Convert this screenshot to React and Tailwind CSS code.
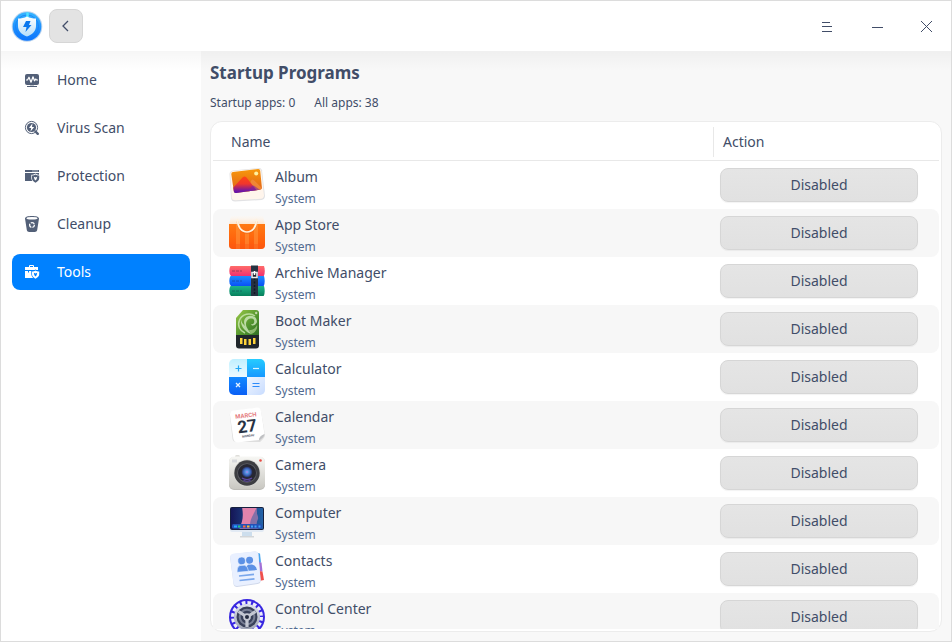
import React from 'react';

const svgProps = { 'aria-hidden': true, className: 'block size-9 shrink-0', viewBox: '0 0 36 36' };

function LogoIcon() {
  return (
    <svg aria-hidden="true" className="block size-8 shrink-0" viewBox="0 0 32 32">
      <defs>
        <linearGradient id="logoRing" x1="0" y1="0" x2="0" y2="1">
          <stop offset="0" stopColor="#35b4ff" />
          <stop offset="1" stopColor="#0a74ff" />
        </linearGradient>
        <linearGradient id="logoShield" x1="0" y1="0" x2="0" y2="1">
          <stop offset="0" stopColor="#ffffff" />
          <stop offset="1" stopColor="#b5defa" />
        </linearGradient>
      </defs>
      <circle cx="16" cy="16.500" r="15.300" fill="#b9d3ee" />
      <circle cx="16" cy="16.500" r="14.300" fill="url(#logoRing)" />
      <circle cx="16" cy="16.500" r="11.500" fill="none" stroke="#1a7bf0" strokeWidth="1" opacity=".7" />
      <path d="M16.500 2.500v5" stroke="#4fe0ff" strokeWidth="2.500" />
      <path d="M16 6.500c2.700 1.600 5.700 2 9 2v7.500c0 5-3.700 8.600-9 10.500-5.300-1.900-9-5.500-9-10.500V8.500c3.300 0 6.300-.4 9-2z" fill="url(#logoShield)" />
      <path d="M15 11h4.500l-1.500 4h2.500L14.500 22l1-5H12z" fill="#0a78ee" />
    </svg>
  );
}

function HomeIcon() {
  return (
    <svg aria-hidden="true" className="block size-4 shrink-0" viewBox="0 0 16 16">
      <path d="M3 2h10a2 2 0 0 1 2 2v7a2 2 0 0 1-2 2H3a2 2 0 0 1-2-2V4a2 2 0 0 1 2-2z" fill="#536078" />
      <path d="M3 14h10v1H3z" fill="#536078" />
      <path d="M6 13h4v1H6z" fill="#536078" opacity=".35" />
      <path d="M2 8h1.500L5 5.200l2 5 2-5.400 1.500 4L11.800 7l.8 1H14" fill="none" stroke="#fff" strokeWidth="1.200" strokeLinejoin="round" />
    </svg>
  );
}

function ScanIcon() {
  return (
    <svg aria-hidden="true" className="block size-4 shrink-0" viewBox="0 0 16 16">
      <circle cx="7.500" cy="7.500" r="6.100" fill="none" stroke="#536078" strokeWidth="1" />
      <circle cx="7.500" cy="7.500" r="4.600" fill="#536078" />
      <path d="M8.500 3.200 5 8h2.200l-.8 3.800L10.200 7H8z" fill="#fff" />
      <path d="m11.500 11.500 2.300 2.300" stroke="#536078" strokeWidth="2.400" strokeLinecap="round" />
    </svg>
  );
}

function ShieldBadge({ fill, gap }) {
  return (
    <>
      <path d="M11.500 5.500c1.300 1 2.500 1.200 4.500 1.200v3.600c0 2.300-2 3.900-4.500 5-2.400-1.100-4.200-2.700-4.200-5V6.700c1.700 0 2.900-.2 4.200-1.200z" fill={gap} />
      <path d="M11.500 6.500c1.100.8 2.200 1 3.700 1v2.800c0 2-1.600 3.400-3.700 4.400-2.100-1-3.500-2.400-3.500-4.400V7.500c1.300 0 2.400-.2 3.500-1z" fill={fill} />
      <path d="m9.800 8.800 1.700.8 1.700-.8-.6 2.400-1.100 1.200-1.100-1.200z" fill={gap} />
    </>
  );
}

function ProtectionIcon() {
  return (
    <svg aria-hidden="true" className="block size-4 shrink-0" viewBox="0 0 16 16">
      <path d="M1 2h14v2H1zM1 5h14v3H9v5H1z" fill="#536078" />
      <path d="M8.500 2.500h1v1h-1zM10.500 2.500h1v1h-1zM12.500 2.500h1v1h-1z" fill="#fff" />
      <ShieldBadge fill="#536078" gap="#fff" />
    </svg>
  );
}

function CleanupIcon() {
  return (
    <svg aria-hidden="true" className="block size-4 shrink-0" viewBox="0 0 16 16">
      <path d="M1 2.500C1 .8 4 0 8 0s7 .8 7 2.500L13.200 14c-.2 1.300-1.200 2-2.400 2H5.200c-1.200 0-2.200-.7-2.400-2z" fill="#536078" />
      <ellipse cx="8" cy="2.300" rx="5.600" ry="1.200" fill="#fff" />
      <circle cx="8" cy="9" r="2.400" fill="none" stroke="#fff" strokeWidth="1.300" strokeDasharray="4 1" strokeDashoffset="1" />
    </svg>
  );
}

function ToolsIcon() {
  return (
    <svg aria-hidden="true" className="block size-4 shrink-0" viewBox="0 0 16 16">
      <path d="M5.500 3.500v-2h4v2" fill="none" stroke="#fff" strokeWidth="1" />
      <path d="M1 3h13v3H1zM1 7h13v3H9v4H1z" fill="#fff" />
      <path d="M4 7h1v1.500H4zM10 7h1v1h-1z" fill="#0081ff" />
      <ShieldBadge fill="#fff" gap="#0081ff" />
    </svg>
  );
}

function AlbumIcon() {
  return (
    <svg {...svgProps}>
      <defs>
        <linearGradient id="albumSky" x1="0" y1="0" x2="0" y2="1">
          <stop offset="0" stopColor="#fa9d0a" />
          <stop offset="1" stopColor="#d9521c" />
        </linearGradient>
        <linearGradient id="albumHill" x1="0" y1="0" x2="0" y2="1">
          <stop offset="0" stopColor="#ff4614" />
          <stop offset=".4" stopColor="#f0362c" />
          <stop offset=".75" stopColor="#7a189c" />
          <stop offset="1" stopColor="#3d06c8" />
        </linearGradient>
        <clipPath id="albumClip"><path d="M4 5 29 2q2-.2 2.200 1.800l1.700 16.700q.2 2-1.800 2.300L7 26q-2 .2-2.200-1.800L2.300 7.200Q2.200 5.200 4 5z" /></clipPath>
      </defs>
      <path d="M4 3.500 30 1q2.400 0 3 2.200L36 29q-.2 3.500-3.500 4L6 34.500q-3.500 0-4-3.500L.5 7Q.6 4 4 3.500z" fill="#e2e2e4" />
      <path d="M4 4 29.500 1.700q2.300 0 2.700 2L35 28.500q-.2 3-3 3.300L6.200 33.300Q3 33 2.700 30.500L1.300 7.500Q1.300 4.500 4 4z" fill="#fff5ec" />
      <g clipPath="url(#albumClip)">
        <path d="M0 0h36v30H0z" fill="url(#albumSky)" />
        <path d="m17 25 5.500-12q1.200-1 2.200 0L36 24v4H14z" fill="#f08a3c" opacity=".85" />
        <path d="M2 27v-4L13.500 10.500q2-2 4 0L29 25v3z" fill="url(#albumHill)" />
        <path d="m17 27 6-8q1.200-1.200 2.500 0L34 25v4z" fill="#7425a8" opacity=".55" />
      </g>
      <circle cx="27.200" cy="6.500" r="2" fill="#fff1a0" />
    </svg>
  );
}

function StoreIcon() {
  return (
    <svg {...svgProps}>
      <defs>
        <linearGradient id="storeTop" x1="0" y1="0" x2="0" y2="1">
          <stop offset="0" stopColor="#fff7ef" stopOpacity=".3" />
          <stop offset="1" stopColor="#ffe2c4" />
        </linearGradient>
        <linearGradient id="storeBag" x1="0" y1="0" x2="0" y2="1">
          <stop offset="0" stopColor="#ff7a12" />
          <stop offset="1" stopColor="#ff560a" />
        </linearGradient>
      </defs>
      <path d="M2 1h32l2 9H0z" fill="url(#storeTop)" />
      <path d="M0 9h36v21q0 4-4 4H4q-4 0-4-4z" fill="url(#storeBag)" />
      <path d="M7 9h4v25H7zM25 9h4v25h-4zM16 18h4v16h-4z" fill="#ffa24a" opacity=".45" />
      <path d="M0 29h36v1q0 4-4 4H4q-4 0-4-4z" fill="#fa5a14" opacity=".45" />
      <path d="M8.500 5.500C9 12.500 13 17 18 17s9-4.500 9.500-11.500" fill="none" stroke="#e45d10" strokeWidth="2" transform="translate(0 1)" opacity=".4" />
      <path d="M8.500 4.500C8.500 12 12.500 17 18 17s9.500-5 9.500-12.500" fill="none" stroke="#fff3de" strokeWidth="1.700" strokeLinecap="round" />
    </svg>
  );
}

function ArchiveIcon() {
  return (
    <svg {...svgProps}>
      <defs>
        <linearGradient id="arcRed" x1="0" y1="0" x2="0" y2="1"><stop offset="0" stopColor="#ff6c68" /><stop offset="1" stopColor="#f03170" /></linearGradient>
        <linearGradient id="arcBlue" x1="0" y1="0" x2="0" y2="1"><stop offset="0" stopColor="#1c8cff" /><stop offset="1" stopColor="#0a50f5" /></linearGradient>
        <linearGradient id="arcGreen" x1="0" y1="0" x2="0" y2="1"><stop offset="0" stopColor="#1cb48c" /><stop offset="1" stopColor="#07805c" /></linearGradient>
      </defs>
      <path d="M1.500 23H35q.7 2 .7 5t-1 5H2Q.3 31.500.3 28t1.200-5z" fill="url(#arcGreen)" />
      <path d="M1.500 13H35q.7 2 .7 5t-1 5H2Q.3 21.500.3 18t1.200-5z" fill="url(#arcBlue)" />
      <path d="M1.500 3H35q.8 2 .8 5t-1 5H2Q.3 11.500.3 8t1.200-5z" fill="url(#arcRed)" />
      <path d="M3 8h10M3 18h10M3 28h10" stroke="#1b2345" strokeWidth="2" strokeDasharray="3 1" opacity=".2" />
      <path d="M22 2.500h7V33h-7z" fill="#263241" />
      <path d="M25.500 15v17" stroke="#111925" strokeWidth="1.500" strokeDasharray="2 1.500" />
      <path d="M23 9.500h5v5h-5z" fill="#20252d" stroke="#e8ebef" strokeWidth="1.600" />
      <path d="M25.500 8v4" stroke="#fff" strokeWidth="1.500" />
    </svg>
  );
}

function BootIcon() {
  return (
    <svg aria-hidden="true" className="block h-9 w-9 shrink-0 overflow-visible" viewBox="0 0 36 36">
      <defs>
        <linearGradient id="bootCard" x1="0" y1="0" x2="1" y2="1"><stop offset="0" stopColor="#9bc948" /><stop offset=".6" stopColor="#4f922d" /><stop offset="1" stopColor="#2e6c25" /></linearGradient>
      </defs>
      <path d="M14-1h13q3 0 3 3v23H7V7z" fill="url(#bootCard)" />
      <path d="M7 24h23v10.500q0 3-3 3H10q-3 0-3-3z" fill="#20262b" />
      <path d="M26 5C21 1 13 3 10.500 9c-2.500 6 .5 11 5.500 13" fill="none" stroke="#d4edbd" strokeWidth="1.500" opacity=".75" />
      <path d="M12 8c-1 8 5 13 10 15-2-4-5-6-5-10 0-5 6-7 8-4 1 3-1 5-3 4 1 3 5 1 6-2 0-5-4-7-8-6-5 1-6 6-4 10-2-2-4-4-4-7z" fill="#d9efc8" opacity=".75" />
      <path d="M22 23c4-1 7-5 6-9-2 4-5 5-8 5z" fill="#bfe09f" opacity=".6" />
      <circle cx="27.200" cy="2" r="1.200" fill="#c2d8a8" />
      <path d="M11 27h2.500v6H11zM15 28h2.500v6H15zM19.500 28H22v6h-2.500zM24 27h2.500v6H24z" fill="#ffd43a" />
    </svg>
  );
}

function CalculatorIcon() {
  return (
    <svg {...svgProps}>
      <defs>
        <clipPath id="calcClip"><rect width="36" height="36" rx="5" /></clipPath>
        <linearGradient id="calcA" x1="0" y1="0" x2="0" y2="1"><stop offset="0" stopColor="#26ccff" /><stop offset="1" stopColor="#1698ff" /></linearGradient>
        <linearGradient id="calcB" x1="0" y1="0" x2="1" y2="1"><stop offset="0" stopColor="#f0f6ff" /><stop offset="1" stopColor="#c8dcff" /></linearGradient>
        <linearGradient id="calcC" x1="0" y1="0" x2="0" y2="1"><stop offset="0" stopColor="#bff0ff" /><stop offset="1" stopColor="#eefaff" /></linearGradient>
        <linearGradient id="calcD" x1="0" y1="0" x2="0" y2="1"><stop offset="0" stopColor="#1289ff" /><stop offset="1" stopColor="#0a5ff5" /></linearGradient>
      </defs>
      <g clipPath="url(#calcClip)">
        <path d="M0 0h18v18H0z" fill="url(#calcC)" />
        <path d="M18 0h18v18H18z" fill="url(#calcA)" />
        <path d="M0 18h18v18H0z" fill="url(#calcD)" />
        <path d="M18 18h18v18H18z" fill="url(#calcB)" />
      </g>
      <path d="M6.500 9.500h6M9.500 6.500v6" stroke="#22a8f5" strokeWidth="1.200" />
      <path d="M24 9.500h6" stroke="#d9f4ff" strokeWidth="1.200" />
      <path d="m7 24 4 4m0-4-4 4" stroke="#e4f2ff" strokeWidth="1.300" />
      <path d="M23.500 24.500h7M23.500 27.500h7" stroke="#2c8bfa" strokeWidth="1.200" />
    </svg>
  );
}

function CalendarIcon() {
  return (
    <svg {...svgProps}>
      <path d="m4 4 24-3q3.500 0 4 3.500L36 28q0 2-2 4l-3 3H8q-4 0-4.500-3L.8 8Q.8 5 4 4z" fill="#dedede" />
      <path d="m4 3.500 24-3q3.500 0 4 3.300L35.500 27 30 33l-21 2.500q-4 0-4.700-4L1 8q-.2-4 3-4.500z" fill="#fff" />
      <path d="M30 33.500q-.5-4.500 5.500-6.500 0 3-5.500 6.500z" fill="#bfc0c3" />
      <g transform="rotate(-7 18 18)" textAnchor="middle" fontFamily="Roboto, sans-serif" fontWeight="700">
        <text x="18" y="10.500" fontSize="6" fill="#e57c80">MARCH</text>
        <text x="18" y="25" fontSize="17" fill="#273244">27</text>
        <text x="18" y="30" fontSize="3" fill="#4b5463">MONDAY</text>
      </g>
    </svg>
  );
}

function CameraIcon() {
  return (
    <svg {...svgProps}>
      <defs>
        <linearGradient id="camBody" x1="0" y1="0" x2="0" y2="1"><stop offset="0" stopColor="#f7f7f4" /><stop offset="1" stopColor="#c9c8c2" /></linearGradient>
        <radialGradient id="camLens"><stop offset="0" stopColor="#c87ce8" /><stop offset=".25" stopColor="#5a9be6" /><stop offset=".65" stopColor="#3a62b8" /><stop offset="1" stopColor="#262a4c" /></radialGradient>
      </defs>
      <rect x="6" y="0" width="5" height="4" rx="1.500" fill="#deddd9" />
      <rect x="0" y="2" width="36" height="33" rx="5" fill="#bdbcb7" />
      <rect x="0" y="1.500" width="36" height="32.500" rx="5" fill="url(#camBody)" />
      <rect x="3" y="4.500" width="5" height="3" fill="#d7d9dc" />
      <circle cx="31.500" cy="5.500" r="1.300" fill="#e64c45" />
      <circle cx="18" cy="18" r="13.500" fill="#d8d8d4" />
      <circle cx="18" cy="18" r="12.700" fill="#3d3e42" />
      <circle cx="18" cy="18" r="9.800" fill="#5c5d64" />
      <circle cx="18" cy="18" r="9" fill="#272832" />
      <circle cx="18" cy="17" r="5.500" fill="url(#camLens)" />
      <path d="M13 23q5 3 10 0M14.500 25.500q3.500 1.500 7 0" fill="none" stroke="#6048a8" strokeWidth="1.200" />
    </svg>
  );
}

function ComputerIcon() {
  return (
    <svg {...svgProps}>
      <defs>
        <clipPath id="pcClip"><rect x="2" y="5" width="32" height="21" rx="1" /></clipPath>
        <linearGradient id="pcBg"><stop offset="0" stopColor="#151657" /><stop offset="1" stopColor="#2464a8" /></linearGradient>
      </defs>
      <rect x="1" y="4" width="34" height="25" rx="2" fill="#e2eaf4" />
      <rect x="1" y="4" width="34" height="23" rx="2" fill="#17203e" />
      <g clipPath="url(#pcClip)">
        <path d="M2 4h32v23H2z" fill="url(#pcBg)" />
        <path d="M13 4h15c-2 5 2 9-2 12-4 2-2 6-4 11H10c3-8 5-12 3-23z" fill="#e283ac" />
        <path d="M28 4c-3 6-4 8-5 10-2 4-2 7-2 13h10c-4-3-4-7-2-11 1-3-3-6-1-12z" fill="#8470a7" />
      </g>
      <rect x="3" y="21" width="30" height="4.500" rx="1.500" fill="#2551b6" />
      <path d="M5 23.500h3" stroke="#22a8ff" strokeWidth="2" />
      <path d="M9 23.500h2.500" stroke="#24c784" strokeWidth="2" />
      <path d="M14 23.500h2.500" stroke="#ff6a3c" strokeWidth="2" />
      <path d="M18 23.500h2.500" stroke="#f9b836" strokeWidth="2" />
      <path d="M22 23.500h2M25.500 23.500h2M29.500 23.500h2" stroke="#42a3f5" strokeWidth="2" />
      <path d="M13 29h10v4H13z" fill="#cddeed" />
      <path d="M11 33h14v1.500H11z" fill="#d3d6d9" />
    </svg>
  );
}

function ContactsIcon() {
  return (
    <svg {...svgProps}>
      <path d="m27 2 4 .5 1 9-4 1z" fill="#47a5ef" />
      <path d="m28 11 4.500.5 1 9H29z" fill="#a270d6" />
      <path d="m29 20 4.500.5L35 29l-5 1z" fill="#f04f4c" />
      <path d="m5 3 21-2.500q3 0 3.400 3l2.300 26q0 3-3 3.500L8 36q-3 0-3.500-3L1.200 7Q1 3.500 5 3z" fill="#d1d9eb" />
      <path d="m5 2.500 21-2q3 0 3.300 3l2.200 25q0 3-3 3.500L8 35q-3 0-3.500-3L1.200 6.500Q1 3 5 2.500z" fill="#e9f0ff" />
      <g fill="#5c91e5" transform="rotate(-5 17 14)">
        <circle cx="21" cy="9.500" r="3.500" />
        <path d="M16 20q0-4 3-6h4q4.500 1.500 4.500 6z" />
        <circle cx="13" cy="9.500" r="3.800" stroke="#e9f0ff" strokeWidth=".6" />
        <path d="M7.500 20.500q0-5 3-6.500h5q3.500 1.500 3.500 6.500z" stroke="#e9f0ff" strokeWidth=".6" />
      </g>
      <path d="m10 25 15-1.700M10.500 29.500l15-1.700" stroke="#7aa7ec" strokeWidth="1.700" />
    </svg>
  );
}

function ControlIcon() {
  return (
    <svg {...svgProps}>
      <defs><linearGradient id="gearFace" x1="0" y1="0" x2="0" y2="1"><stop offset="0" stopColor="#dfe3ee" /><stop offset="1" stopColor="#9fa5b5" /></linearGradient></defs>
      <circle cx="18" cy="18" r="18" fill="#3827e0" />
      <circle cx="18" cy="18" r="14.300" fill="none" stroke="#eceefa" strokeWidth="3.400" strokeDasharray="3.600 2.016" />
      <circle cx="18" cy="18" r="13" fill="url(#gearFace)" />
      <circle cx="18" cy="18" r="10.500" fill="#39415a" />
      <circle cx="18" cy="18" r="7.300" fill="none" stroke="#787f94" strokeWidth="2" />
      <path d="M18 18V28M18 18 9.500 12.500M18 18l8.500-5.500" stroke="#c4c8d3" strokeWidth="3.200" />
      <circle cx="18" cy="18" r="3.800" fill="#c6c9d3" />
      <circle cx="18" cy="18" r="2" fill="#252c40" />
    </svg>
  );
}

const navItems = [
  { label: 'Home', Icon: HomeIcon },
  { label: 'Virus Scan', Icon: ScanIcon },
  { label: 'Protection', Icon: ProtectionIcon },
  { label: 'Cleanup', Icon: CleanupIcon },
  { label: 'Tools', Icon: ToolsIcon, active: true },
];

const apps = [
  { name: 'Album', Icon: AlbumIcon },
  { name: 'App Store', Icon: StoreIcon },
  { name: 'Archive Manager', Icon: ArchiveIcon },
  { name: 'Boot Maker', Icon: BootIcon },
  { name: 'Calculator', Icon: CalculatorIcon },
  { name: 'Calendar', Icon: CalendarIcon },
  { name: 'Camera', Icon: CameraIcon },
  { name: 'Computer', Icon: ComputerIcon },
  { name: 'Contacts', Icon: ContactsIcon },
  { name: 'Control Center', Icon: ControlIcon },
];

function TitleBar() {
  return (
    <header className="flex h-[50px] shrink-0 items-center bg-white pl-[10px]">
      <LogoIcon />
      <button type="button" aria-label="Back" className="ml-[6px] flex size-[34px] items-center justify-center rounded-lg border border-[#d6d6d6] bg-[#e3e3e3]">
        <svg aria-hidden="true" className="size-4" viewBox="0 0 16 16">
          <path d="M10 3 5 8l5 5" fill="none" stroke="#414d68" strokeWidth="1.300" />
        </svg>
      </button>
      <div className="ml-auto flex h-full">
        <button type="button" aria-label="Menu" className="flex w-[50px] items-center justify-center">
          <svg aria-hidden="true" className="size-4" viewBox="0 0 16 16" shapeRendering="crispEdges">
            <path d="M4 4.500h8M4 8.500h10M4 13.500h10" fill="none" stroke="#414d68" />
          </svg>
        </button>
        <button type="button" aria-label="Minimize" className="flex w-[50px] items-center justify-center">
          <svg aria-hidden="true" className="size-4" viewBox="0 0 16 16" shapeRendering="crispEdges">
            <path d="M4 9.500h11" fill="none" stroke="#414d68" />
          </svg>
        </button>
        <button type="button" aria-label="Close" className="flex w-[50px] items-center justify-center">
          <svg aria-hidden="true" className="size-4" viewBox="0 0 16 16">
            <path d="m3 3 11 11m0-11L3 14" fill="none" stroke="#414d68" />
          </svg>
        </button>
      </div>
    </header>
  );
}

function Sidebar() {
  return (
    <nav className="flex w-[200px] shrink-0 flex-col gap-3 bg-white px-[11px] pt-[11px]">
      {navItems.map(({ label, Icon, active }) => (
        <a
          key={label}
          href="#"
          aria-current={active ? 'page' : undefined}
          className={`flex h-9 items-center gap-[17px] rounded-lg pl-3 text-sm ${active ? 'bg-[#0081ff] text-white' : 'text-[#414d68]'}`}
        >
          <Icon />
          {label}
        </a>
      ))}
    </nav>
  );
}

function AppRow({ name, Icon, striped }) {
  const bg = striped ? 'bg-[#f7f7f7]' : 'bg-white';
  return (
    <tr className="h-12">
      <td className={`rounded-l-lg p-0 pl-4 ${bg}`}>
        <div className="flex h-12 items-center gap-[10px]">
          <Icon />
          <div className="pt-[6px]">
            <div className="text-sm leading-[22px]">{name}</div>
            <div className="text-xs leading-[22px] text-[#526a8f]">System</div>
          </div>
        </div>
      </td>
      <td className={`rounded-r-lg p-0 pl-[7px] pr-[21px] ${bg}`}>
        <button type="button" className="block h-[34px] w-full rounded-lg border border-[#d6d6d6] bg-linear-to-b from-[#e5e5e5] to-[#e1e1e1] text-sm shadow-[0_1px_1px_rgba(0,0,0,0.05)]">
          Disabled
        </button>
      </td>
    </tr>
  );
}

export default function App() {
  return (
    <div className="flex h-screen w-full flex-col overflow-hidden border border-[#dcdcdc] bg-[#f8f8f8] font-['Noto_Sans',sans-serif] text-[#414d68]">
      <TitleBar />
      <div className="relative flex min-h-0 flex-1">
        <Sidebar />
        <main className="flex min-w-0 flex-1 flex-col px-[9px] pt-[10px] pb-[9px]">
          <h1 className="text-[17px] leading-6 font-bold">Startup Programs</h1>
          <p className="my-[9px] flex gap-[19px] text-xs leading-[18px]">
            <span>Startup apps: 0</span>
            <span>All apps: 38</span>
          </p>
          <section className="min-h-0 flex-1 rounded-xl border border-[#ececec] bg-white px-[2px] pb-[2px]">
            <div className="h-full overflow-y-auto rounded-t-[10px] [scrollbar-width:none]">
              <table className="w-full table-fixed border-separate border-spacing-0 text-left">
                <thead className="sticky top-0 z-10 bg-white">
                  <tr className="h-[39px]">
                    <th scope="col" className="border-b border-[#e8e8e8] p-0 pt-[2px] pl-[18px] text-sm font-normal">Name</th>
                    <th scope="col" className="w-[226px] border-b border-[#e8e8e8] p-0 pt-[2px] text-sm font-normal">
                      <div className="flex h-[30px] items-center border-l border-[#e8e8e8] pl-[9px]">Action</div>
                    </th>
                  </tr>
                </thead>
                <tbody>
                  {apps.map((app, i) => (
                    <AppRow key={app.name} {...app} striped={i % 2 === 1} />
                  ))}
                </tbody>
              </table>
            </div>
          </section>
        </main>
        <div className="pointer-events-none absolute inset-x-0 top-0 h-5 bg-linear-to-b from-black/[0.035] to-transparent" />
      </div>
    </div>
  );
}
